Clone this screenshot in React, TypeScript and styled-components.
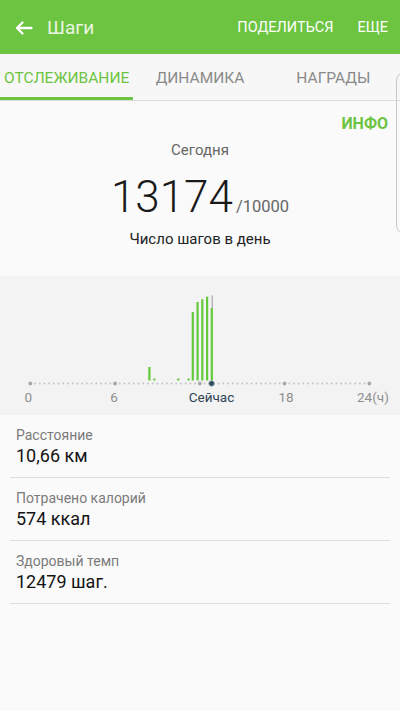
import styled, { createGlobalStyle } from "styled-components";

const GREEN = "#6cc441";

const GlobalStyle = createGlobalStyle`
  body {
    margin: 0;
    font-family: Roboto, "Noto Sans", sans-serif;
    background: #fafafa;
  }
`;

const Screen = styled.div`
  position: relative;
  width: 400px;
  min-height: 711px;
  background: #fafafa;
  overflow: hidden;
`;

const Header = styled.header`
  display: flex;
  align-items: center;
  height: 54px;
  padding: 0 12px 0 15px;
  background: ${GREEN};
  color: #fff;
`;

const BackButton = styled.div`
  display: flex;
  align-items: center;
  width: 18px;
  height: 14px;
  margin-top: 1px;
`;

const Title = styled.h1`
  flex: 1;
  margin: 0 0 0 14px;
  font-size: 19px;
  font-weight: 400;
  color: #eaf6e2;
`;

const Action = styled.span`
  font-size: 14.5px;
  margin-left: 24px;
  color: #fff;
`;

const TabBar = styled.nav`
  display: grid;
  grid-template-columns: repeat(3, 1fr);
  height: 46px;
  background: #f7f7f7;
  border-bottom: 1px solid #dcdcdc;
`;

const Tab = styled.div<{ $active?: boolean }>`
  display: flex;
  align-items: center;
  justify-content: center;
  padding-top: 1px;
  font-size: 15.5px;
  color: ${(p) => (p.$active ? GREEN : "#8a8a8a")};
  box-shadow: ${(p) => (p.$active ? `inset 0 -3px 0 ${GREEN}` : "none")};
`;

const Summary = styled.section`
  display: flex;
  flex-direction: column;
  align-items: center;
  padding: 13px 0 27px;
`;

const Info = styled.div`
  align-self: flex-end;
  margin-right: 12px;
  font-size: 16px;
  line-height: 20px;
  font-weight: 700;
  color: ${GREEN};
`;

const Today = styled.div`
  margin-top: 6px;
  font-size: 15px;
  line-height: 20px;
  color: #666;
`;

const CountRow = styled.div`
  display: flex;
  align-items: baseline;
  margin-top: 12px;
  height: 50px;
  line-height: 50px;
`;

const Count = styled.span`
  font-size: 44px;
  font-weight: 300;
  color: #1a1a1a;
`;

const Goal = styled.span`
  margin-left: 3px;
  font-size: 16.5px;
  color: #666;
`;

const Caption = styled.div`
  margin-top: 7px;
  font-size: 15px;
  line-height: 20px;
  color: #222;
`;

const ChartSection = styled.section`
  height: 139px;
  background: #f3f3f3;
`;

const StatsList = styled.div`
  display: flex;
  flex-direction: column;
  padding: 0 10px;
`;

const StatRow = styled.div`
  display: flex;
  flex-direction: column;
  padding: 11px 6px 9px;
  border-bottom: 1px solid #dedede;
`;

const StatLabel = styled.span`
  font-size: 14px;
  line-height: 18px;
  color: #7a7a7a;
`;

const StatValue = styled.span`
  font-size: 18px;
  line-height: 24px;
  color: #141414;
`;

const EdgeCurve = styled.div`
  position: absolute;
  top: 71px;
  left: 396px;
  width: 24px;
  height: 162px;
  border: 1px solid #c8c8c8;
  border-radius: 10px;
`;

// chart coords are page coords minus the section top (276)
const AXIS_Y = 107.5;
const BAR_BOTTOM = 104.5;
const X0 = 30.3;
const X24 = 369.3;

const bars = [
  { x: 149.3, top: 367 },
  { x: 154.3, top: 378.5 },
  { x: 178.2, top: 378.5 },
  { x: 188.5, top: 378.5 },
  { x: 192.7, top: 312 },
  { x: 197.5, top: 302 },
  { x: 202.2, top: 299.3 },
  { x: 207, top: 296.7 },
  { x: 211.7, top: 308 },
];

const NOW_X = 211.6;

const StepChart = () => {
  const dots = [];
  const step = (X24 - X0) / 72;
  for (let i = 0; i <= 72; i++) {
    const x = X0 + i * step;
    const major = i % 18 === 0;
    dots.push(
      <circle
        key={i}
        cx={x}
        cy={AXIS_Y}
        r={major ? 1.9 : 1}
        fill={major ? "#a9a9a9" : "#c4c4c4"}
      />
    );
  }
  return (
    <svg width="400" height="139" viewBox="0 0 400 139">
      {dots}
      {bars.map((b, i) => (
        <rect
          key={i}
          x={b.x - 1}
          y={b.top - 276}
          width={2.2}
          height={BAR_BOTTOM - (b.top - 276)}
          fill="#62c93a"
        />
      ))}
      <line x1={NOW_X + 0.6} y1={19.3} x2={NOW_X + 0.6} y2={32} stroke="#999" strokeWidth="1" />
      <circle cx={NOW_X} cy={AXIS_Y} r={2.8} fill="#2f4a5c" stroke="#9fb0bb" strokeWidth="0.8" />
      <g fontFamily="Roboto, sans-serif" fontSize="13.5" fill="#8e8e8e">
        <text x={28.3} y={125.5} textAnchor="middle">0</text>
        <text x={114} y={125.5} textAnchor="middle">6</text>
        <text x={211.5} y={125.5} textAnchor="middle" fill="#2c4456">Сейчас</text>
        <text x={286} y={125.5} textAnchor="middle">18</text>
        <text x={357} y={125.5}>24(ч)</text>
      </g>
    </svg>
  );
};

const stats = [
  { label: "Расстояние", value: "10,66 км" },
  { label: "Потрачено калорий", value: "574 ккал" },
  { label: "Здоровый темп", value: "12479 шаг." },
];

export default function App() {
  return (
    <Screen>
      <GlobalStyle />
      <Header>
        <BackButton>
          <svg width="18" height="14" viewBox="0 0 18 14" fill="none" stroke="#fff" strokeWidth="2.3" strokeLinecap="round" strokeLinejoin="round">
            <path d="M2 7H16.5M7.5 1.5L2 7l5.5 5.5" />
          </svg>
        </BackButton>
        <Title>Шаги</Title>
        <Action>ПОДЕЛИТЬСЯ</Action>
        <Action>ЕЩЕ</Action>
      </Header>
      <TabBar>
        <Tab $active>ОТСЛЕЖИВАНИЕ</Tab>
        <Tab>ДИНАМИКА</Tab>
        <Tab>НАГРАДЫ</Tab>
      </TabBar>
      <Summary>
        <Info>ИНФО</Info>
        <Today>Сегодня</Today>
        <CountRow>
          <Count>13174</Count>
          <Goal>/10000</Goal>
        </CountRow>
        <Caption>Число шагов в день</Caption>
      </Summary>
      <ChartSection>
        <StepChart />
      </ChartSection>
      <StatsList>
        {stats.map((s) => (
          <StatRow key={s.label}>
            <StatLabel>{s.label}</StatLabel>
            <StatValue>{s.value}</StatValue>
          </StatRow>
        ))}
      </StatsList>
      <EdgeCurve />
    </Screen>
  );
}
